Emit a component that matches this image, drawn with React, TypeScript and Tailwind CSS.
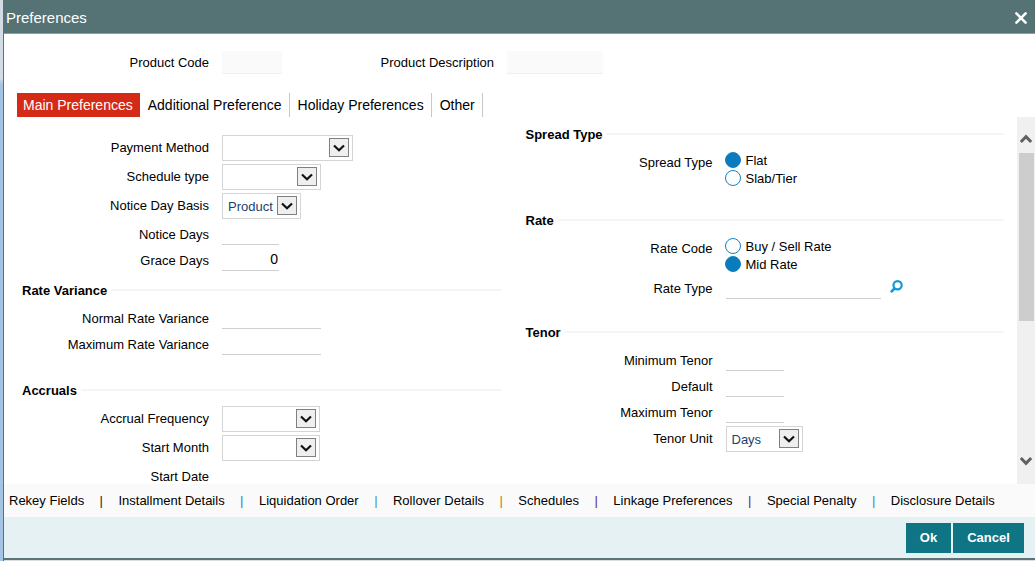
// App.tsx
// Product preferences dialog: title bar, product header, tabs, two-column form, link bar, actions

import { clsx } from 'clsx';
import { ReactNode, useRef, useState } from 'react';

type Tab = 'Main Preferences' | 'Additional Preference' | 'Holiday Preferences' | 'Other';

const TABS: Tab[] = ['Main Preferences', 'Additional Preference', 'Holiday Preferences', 'Other'];

// Each link carries the colour of the separator that follows it
const LINKS = [
  { label: 'Rekey Fields', separator: 'text-[#222222]' },
  { label: 'Installment Details', separator: 'text-[#2a7fc4]' },
  { label: 'Liquidation Order', separator: 'text-[#4a90c0]' },
  { label: 'Rollover Details', separator: 'text-[#b8762a]' },
  { label: 'Schedules', separator: 'text-[#5a2a6a]' },
  { label: 'Linkage Preferences', separator: 'text-[#6a1a70]' },
  { label: 'Special Penalty', separator: 'text-[#3a86c8]' },
  { label: 'Disclosure Details', separator: '' },
];

function Section({ title, className, children }: { title?: string; className?: string; children: ReactNode }) {
  return (
    <section className={className}>
      {title && (
        <div className="flex items-center gap-1 mb-1.5">
          <h2 className="h-5 text-[13px] leading-[22px] font-bold">{title}</h2>
          <div className="flex-1 h-0.5 bg-[#f5f5f5]" />
        </div>
      )}
      <div className="flex flex-col gap-[3px]">{children}</div>
    </section>
  );
}

function Row({ id, label, children }: { id: string; label: string; children: ReactNode }) {
  return (
    <div className="flex items-start gap-[13px]">
      <label htmlFor={id} className="h-[23px] w-[187px] shrink-0 text-right leading-[25px]">
        {label}
      </label>
      {children}
    </div>
  );
}

function TextRow({ id, label, width, value }: { id: string; label: string; width: string; value?: string }) {
  return (
    <Row id={id} label={label}>
      <input
        id={id}
        type="text"
        defaultValue={value}
        className={clsx('h-[23px] border-b border-[#cfcfcf] pr-px text-right text-sm outline-none', width)}
      />
    </Row>
  );
}

function SelectRow({ id, label, width, options }: { id: string; label: string; width: string; options: string[] }) {
  return (
    <Row id={id} label={label}>
      <div className={clsx('relative', width)}>
        <select
          id={id}
          className="block w-full h-[26px] appearance-none border border-[#d4d4d4] bg-white pt-0.5 pl-[5px] text-[#1d3f6e] outline-none"
        >
          {options.map((option) => (
            <option key={option}>{option}</option>
          ))}
        </select>
        <span className="pointer-events-none absolute right-1 top-[3px] flex h-[19px] w-5 items-center justify-center border border-[#808080] bg-[#efefef]">
          <svg width="12" height="8" viewBox="0 0 12 8" fill="none" stroke="#111111" strokeWidth="2.2">
            <path d="M1 1.5 L6 6.2 L11 1.5" />
          </svg>
        </span>
      </div>
    </Row>
  );
}

function RadioRow({ name, label, options, selected }: { name: string; label: string; options: string[]; selected: string }) {
  return (
    <fieldset className="flex items-start gap-3 pt-px">
      <legend className="float-left w-[187px] shrink-0 text-right leading-[23px]">{label}</legend>
      <div>
        {options.map((option) => (
          <label key={option} className="flex items-center gap-[5px] h-[18px]">
            <input
              type="radio"
              name={name}
              defaultChecked={option === selected}
              className="size-4 appearance-none rounded-full border border-[#1583bd] bg-white checked:bg-[#0a7cbd]"
            />
            <span className="pt-px">{option}</span>
          </label>
        ))}
      </div>
    </fieldset>
  );
}

function ScrollButton({ direction, onClick }: { direction: 'up' | 'down'; onClick: () => void }) {
  return (
    <button
      type="button"
      aria-label={`Scroll ${direction}`}
      onClick={onClick}
      className={clsx('flex h-9 w-full items-center justify-center', direction === 'up' ? 'pt-2' : 'pb-2.5')}
    >
      <svg width="12" height="10" viewBox="0 0 12 10" fill="none" stroke="#606060" strokeWidth="3">
        <path d={direction === 'up' ? 'M0.8 8 L6 2.6 L11.2 8' : 'M0.8 2 L6 7.4 L11.2 2'} />
      </svg>
    </button>
  );
}

export default function App() {
  const [activeTab, setActiveTab] = useState<Tab>('Main Preferences');
  const bodyRef = useRef<HTMLDivElement>(null);

  const scrollBody = (top: number) => bodyRef.current?.scrollBy({ top });

  return (
    <div className="flex h-screen bg-[#d9dede] text-[13px] text-black font-['Liberation_Sans',Arial,sans-serif]">
      {/* Window frame edge */}
      <div className="w-1 shrink-0 border-r border-[#5a6f80] bg-linear-to-b from-[#d3dbe4] from-14% to-[#a5c4e4] to-15%" />

      <div className="flex min-w-0 flex-1 flex-col border-b-2 border-[#5c7479] bg-white mb-px">
        <header className="flex h-[34px] shrink-0 items-center justify-between border-b border-[#8ca0a4] bg-[#557275] pt-[3px] pl-0.5 pr-2 text-white">
          <h1 className="text-[15px]">Preferences</h1>
          <button type="button" aria-label="Close">
            <svg width="12" height="12" viewBox="0 0 12 12" fill="none" stroke="#ffffff" strokeWidth="2.6" strokeLinecap="round">
              <path d="M1.4 1.4 L10.6 10.6 M10.6 1.4 L1.4 10.6" />
            </svg>
          </button>
        </header>

        <div className="flex shrink-0 items-center pt-[17px] pb-[19px]">
          <label htmlFor="product-code" className="w-[205px] text-right">Product Code</label>
          <input id="product-code" readOnly className="ml-[13px] h-[23px] w-[60px] border-b border-[#f0f0f0] bg-[#fafafa] outline-none" />
          <label htmlFor="product-description" className="w-[212px] text-right">Product Description</label>
          <input id="product-description" readOnly className="ml-[13px] h-[23px] w-24 border-b border-[#f0f0f0] bg-[#fafafa] outline-none" />
        </div>

        <nav className="flex h-6 shrink-0 pl-[13px] text-sm" role="tablist">
          {TABS.map((tab) => (
            <button
              key={tab}
              type="button"
              role="tab"
              aria-selected={activeTab === tab}
              onClick={() => setActiveTab(tab)}
              className={clsx(
                'border-r',
                activeTab === tab ? 'border-[#d42a16] bg-[#d42a16] px-1.5 text-white' : 'border-[#c8c8c8] pl-2 pr-[7px]',
              )}
            >
              {tab}
            </button>
          ))}
        </nav>

        <div className="flex min-h-0 flex-1">
          <div ref={bodyRef} className="grid min-w-0 flex-1 grid-cols-2 gap-x-[25px] overflow-y-auto pl-[18px] pr-[13px] [scrollbar-width:none]">
            <div className="pt-[18px]">
              <Section>
                <SelectRow id="payment-method" label="Payment Method" width="w-[131px]" options={['']} />
                <SelectRow id="schedule-type" label="Schedule type" width="w-[99px]" options={['']} />
                <SelectRow id="notice-basis" label="Notice Day Basis" width="w-[79px]" options={['Product']} />
                <TextRow id="notice-days" label="Notice Days" width="w-[57px]" />
                <TextRow id="grace-days" label="Grace Days" width="w-[57px]" value="0" />
              </Section>
              <Section title="Rate Variance" className="mt-[9px]">
                <TextRow id="normal-variance" label="Normal Rate Variance" width="w-[99px]" />
                <TextRow id="maximum-variance" label="Maximum Rate Variance" width="w-[99px]" />
              </Section>
              <Section title="Accruals" className="mt-[25px]">
                <SelectRow id="accrual-frequency" label="Accrual Frequency" width="w-[98px]" options={['']} />
                <SelectRow id="start-month" label="Start Month" width="w-[98px]" options={['']} />
                <TextRow id="start-date" label="Start Date" width="w-[98px]" />
              </Section>
            </div>

            <div className="pt-[7px]">
              <Section title="Spread Type">
                <RadioRow name="spread-type" label="Spread Type" options={['Flat', 'Slab/Tier']} selected="Flat" />
              </Section>
              <Section title="Rate" className="mt-[23px]">
                <RadioRow name="rate-code" label="Rate Code" options={['Buy / Sell Rate', 'Mid Rate']} selected="Mid Rate" />
                <div className="flex items-start gap-[9px]">
                  <TextRow id="rate-type" label="Rate Type" width="w-[155px]" />
                  <button type="button" aria-label="Look up rate type" className="pt-1">
                    <svg width="13" height="13" viewBox="0 0 12 12" fill="none" stroke="#0d9ad8" strokeWidth="2">
                      <circle cx="7" cy="4.8" r="3.8" />
                      <path d="M4.4 7.6 L0.8 11.2" strokeWidth="2.4" />
                    </svg>
                  </button>
                </div>
              </Section>
              <Section title="Tenor" className="mt-[23px]">
                <TextRow id="minimum-tenor" label="Minimum Tenor" width="w-[58px]" />
                <TextRow id="default-tenor" label="Default" width="w-[58px]" />
                <TextRow id="maximum-tenor" label="Maximum Tenor" width="w-[58px]" />
                <SelectRow id="tenor-unit" label="Tenor Unit" width="w-[77px]" options={['Days']} />
              </Section>
            </div>
          </div>

          <div className="flex w-[18px] shrink-0 flex-col bg-[#f0f0f0]">
            <ScrollButton direction="up" onClick={() => scrollBody(-20)} />
            <div className="flex-1 pl-0.5 pr-px">
              <div className="h-[57%] bg-[#cdcdcd]" />
            </div>
            <ScrollButton direction="down" onClick={() => scrollBody(20)} />
          </div>
        </div>

        <nav className="flex h-[33px] shrink-0 items-center justify-between bg-[#fafafa] pl-[5px] pr-10">
          {LINKS.map(({ label, separator }) => [
            <a key={label} href="#">{label}</a>,
            separator && <span key={`${label}-separator`} className={separator}>|</span>,
          ])}
        </nav>

        <footer className="flex h-[41px] shrink-0 items-center justify-end gap-0.5 bg-[#e6f1f3] pr-[11px] font-bold text-white">
          <button type="button" className="h-[30px] w-[45px] bg-[#0f7585]">Ok</button>
          <button type="button" className="h-[30px] w-[71px] bg-[#0f7585]">Cancel</button>
        </footer>
      </div>
    </div>
  );
}
